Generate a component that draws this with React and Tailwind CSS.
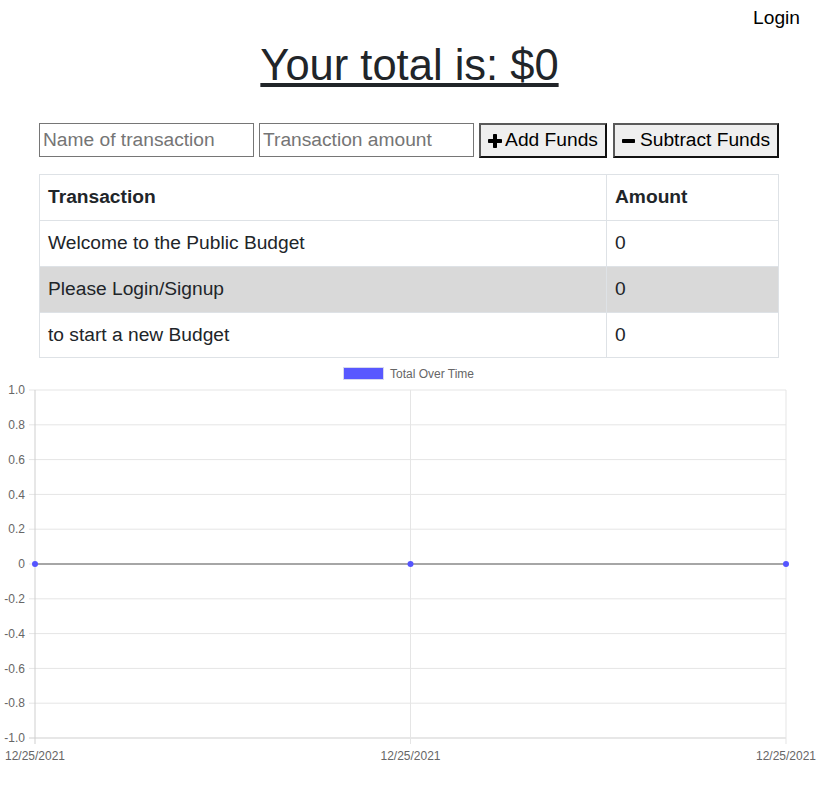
import React from "react";

const gridYs = [390, 424.8, 459.6, 494.4, 529.2, 564, 598.8, 633.6, 668.4, 703.2, 738];
const yLabels = ["1.0", "0.8", "0.6", "0.4", "0.2", "0", "-0.2", "-0.4", "-0.6", "-0.8", "-1.0"];
const xs = [35, 410.5, 786];

function Chart() {
  return (
    <svg width="819" height="431" viewBox="0 358 819 431" className="block">
      <rect x="343.5" y="367.5" width="40" height="12" fill="#5858ff" stroke="#d6d8ee" strokeWidth="1" />
      <text x="390" y="378.2" fontSize="12" fill="#666" fontFamily="'Liberation Sans', Arial, sans-serif">Total Over Time</text>
      {gridYs.map((y, i) => (
        <line key={"h" + i} x1="29" x2="786" y1={y} y2={y} stroke={i === 10 ? "#cfcfcf" : "#e5e5e5"} strokeWidth="1" />
      ))}
      {xs.map((x, i) => (
        <line key={"v" + i} x1={x} x2={x} y1="390" y2="744" stroke={i === 0 ? "#cfcfcf" : "#e5e5e5"} strokeWidth="1" />
      ))}
      {gridYs.map((y, i) => (
        <text key={"yl" + i} x="25" y={y + 4.2} fontSize="12" fill="#666" textAnchor="end" fontFamily="'Liberation Sans', Arial, sans-serif">{yLabels[i]}</text>
      ))}
      {xs.map((x, i) => (
        <text key={"xl" + i} x={x} y="759.5" fontSize="12" fill="#666" textAnchor="middle" fontFamily="'Liberation Sans', Arial, sans-serif">12/25/2021</text>
      ))}
      <line x1="35" x2="786" y1="564" y2="564" stroke="#a6a6a6" strokeWidth="2" />
      {xs.map((x, i) => (
        <circle key={"p" + i} cx={x} cy="564" r="3" fill="#5555ff" />
      ))}
    </svg>
  );
}

function PlusIcon() {
  return (
    <svg width="14" height="14" viewBox="0 0 14 14" className="shrink-0">
      <rect x="5" y="0" width="4" height="14" rx="0.8" fill="#000" />
      <rect x="0" y="5" width="14" height="4" rx="0.8" fill="#000" />
    </svg>
  );
}

function MinusIcon() {
  return (
    <svg width="13" height="14" viewBox="0 0 13 14" className="shrink-0">
      <rect x="0" y="5" width="13" height="4" rx="0.8" fill="#000" />
    </svg>
  );
}

const rows = [
  ["Welcome to the Public Budget", "0", ""],
  ["Please Login/Signup", "0", "bg-[#d9d9d9]"],
  ["to start a new Budget", "0", ""],
];

export default function App() {
  return (
    <div className="w-[819px] min-h-[789px] bg-white text-[#212529] font-['Liberation_Sans',Arial,sans-serif]">
      <div className="h-[36px] flex justify-end items-center pr-[19px] text-[19.2px] text-black">Login</div>
      <h1 className="mt-[5px] h-[48px] leading-[48px] text-[43.5px] text-center underline">Your total is: $0</h1>
      <div className="mt-[34px] ml-[39px] flex items-start h-[34px]">
        <input
          className="w-[215px] h-[34px] border border-[#767676] px-[3px] text-[19.2px] placeholder:text-[#757575] outline-none"
          placeholder="Name of transaction"
        />
        <input
          className="ml-[5px] w-[215px] h-[34px] border border-[#767676] px-[3px] text-[19.2px] placeholder:text-[#757575] outline-none"
          placeholder="Transaction amount"
        />
        <button className="ml-[5px] w-[128px] h-[35px] flex items-center justify-center gap-[3px] bg-[#efefef] border-2 border-t-[#5a5a5a] border-l-[#5a5a5a] border-r-[#111] border-b-[#111] text-[19.2px] text-black">
          <PlusIcon />
          <span>Add Funds</span>
        </button>
        <button className="ml-[6px] w-[166px] h-[35px] flex items-center justify-center gap-[5px] bg-[#efefef] border-2 border-t-[#5a5a5a] border-l-[#5a5a5a] border-r-[#111] border-b-[#111] text-[19.2px] text-black">
          <MinusIcon />
          <span>Subtract Funds</span>
        </button>
      </div>
      <div className="mt-[17px] ml-[39px] w-[740px] border border-[#dee2e6] text-[19.2px]">
        <div className="grid grid-cols-[566px_173px] h-[46px] border-b border-[#dee2e6] font-bold">
          <div className="flex items-center pl-[8px]">Transaction</div>
          <div className="flex items-center pl-[8px] border-l border-[#dee2e6]">Amount</div>
        </div>
        {rows.map(([a, b, bg], i) => (
          <div
            key={i}
            className={
              "grid grid-cols-[566px_173px] " +
              (i < 2 ? "h-[46px] border-b border-[#dee2e6] " : "h-[44px] ") +
              bg
            }
          >
            <div className="flex items-center pl-[8px]">{a}</div>
            <div className="flex items-center pl-[8px] border-l border-[#dee2e6]">{b}</div>
          </div>
        ))}
      </div>
      <Chart />
    </div>
  );
}
